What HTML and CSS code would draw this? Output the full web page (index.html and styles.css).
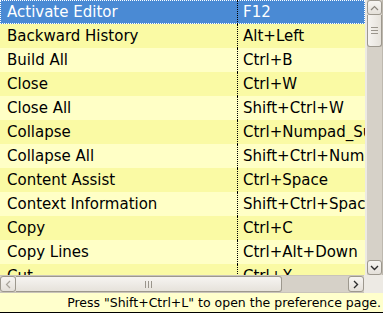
FILE: index.html
```html
<!DOCTYPE html>
<html lang="en">
<head>
  <meta charset="UTF-8" />
  <title>Key Assist</title>
  <link rel="stylesheet" href="styles.css">
</head>
<body>
  <div class="popup">
    <div class="main">
      <div class="list">
        <div class="row selected"><span class="cmd">Activate Editor</span><span class="key">F12</span></div>
        <div class="row odd"><span class="cmd">Backward History</span><span class="key">Alt+Left</span></div>
        <div class="row even"><span class="cmd">Build All</span><span class="key">Ctrl+B</span></div>
        <div class="row odd"><span class="cmd">Close</span><span class="key">Ctrl+W</span></div>
        <div class="row even"><span class="cmd">Close All</span><span class="key">Shift+Ctrl+W</span></div>
        <div class="row odd"><span class="cmd">Collapse</span><span class="key">Ctrl+Numpad_Subtract</span></div>
        <div class="row even"><span class="cmd">Collapse All</span><span class="key">Shift+Ctrl+Numpad_Divide</span></div>
        <div class="row odd"><span class="cmd">Content Assist</span><span class="key">Ctrl+Space</span></div>
        <div class="row even"><span class="cmd">Context Information</span><span class="key">Shift+Ctrl+Space</span></div>
        <div class="row odd"><span class="cmd">Copy</span><span class="key">Ctrl+C</span></div>
        <div class="row even"><span class="cmd">Copy Lines</span><span class="key">Ctrl+Alt+Down</span></div>
        <div class="row odd"><span class="cmd">Cut</span><span class="key">Ctrl+X</span></div>
      </div>
      <div class="vscroll">
        <div class="sbtn up">
          <svg width="9" height="6" viewBox="0 0 9 6"><path d="M1 5 L4.5 1.5 L8 5" fill="none" stroke="#8a857c" stroke-width="1.2"/></svg>
        </div>
        <div class="vthumb">
          <div class="grip-h"></div><div class="grip-h"></div><div class="grip-h"></div>
        </div>
        <div class="vtrough"></div>
        <div class="sbtn down">
          <svg width="9" height="6" viewBox="0 0 9 6"><path d="M1 1 L4.5 4.5 L8 1" fill="none" stroke="#2e2e2e" stroke-width="1.4"/></svg>
        </div>
      </div>
    </div>
    <div class="hbar">
      <div class="hscroll">
        <div class="sbtn left">
          <svg width="6" height="9" viewBox="0 0 6 9"><path d="M5 1 L1.5 4.5 L5 8" fill="none" stroke="#a8a39a" stroke-width="1.2"/></svg>
        </div>
        <div class="hthumb">
          <div class="grip-v"></div><div class="grip-v"></div><div class="grip-v"></div>
        </div>
        <div class="htrough"></div>
        <div class="sbtn right">
          <svg width="6" height="9" viewBox="0 0 6 9"><path d="M1 1 L4.5 4.5 L1 8" fill="none" stroke="#2e2e2e" stroke-width="1.4"/></svg>
        </div>
      </div>
      <div class="corner"></div>
    </div>
    <div class="status">Press "Shift+Ctrl+L" to open the preference page.</div>
  </div>
</body>
</html>
```

FILE: styles.css
```css
body {
  margin: 0;
  font-family: 'DejaVu Sans', sans-serif;
}
.popup {
  width: 383px;
  height: 313px;
  display: flex;
  flex-direction: column;
  background: #ffffcc;
  overflow: hidden;
}
.main {
  height: 275px;
  display: flex;
  background: #edeae4;
}
.list {
  width: 366px;
  overflow: hidden;
  font-size: 15px;
  color: #000;
}
.row {
  height: 24px;
  display: flex;
  align-items: center;
  white-space: nowrap;
}
.row.odd { background: #fafaa4; }
.row.even { background: #ffffc6; }
.row.selected {
  background: #4a8ad4;
  color: #fff;
  outline: 1px dotted #fff;
  outline-offset: -1px;
}
.cmd {
  flex: none;
  width: 238px;
  padding-left: 7px;
  border-right: 1px dotted #000;
  height: 24px;
  line-height: 24px;
  box-sizing: border-box;
}
.key {
  padding-left: 5px;
  height: 24px;
  line-height: 24px;
}
.vscroll {
  width: 15px;
  margin-left: 2px;
  display: flex;
  flex-direction: column;
  background: #d6d1c8;
  border-right: 1px solid #bdb8ae;
}
.sbtn {
  display: flex;
  align-items: center;
  justify-content: center;
  background: linear-gradient(#f7f5f2, #e4e0d9);
  border: 1px solid #9d988e;
  border-radius: 3px;
  box-sizing: border-box;
  flex: none;
}
.sbtn.up, .sbtn.down {
  height: 15px;
}
.vthumb {
  height: 32px;
  display: flex;
  flex-direction: column;
  align-items: center;
  justify-content: center;
  gap: 2px;
  background: linear-gradient(90deg, #f6f4f1, #e6e2db);
  border: 1px solid #9d988e;
  border-top: none;
  border-radius: 0 0 3px 3px;
  box-sizing: border-box;
}
.grip-h {
  width: 7px;
  height: 1px;
  background: #9a958c;
}
.vtrough { flex: 1; }
.hbar {
  height: 18px;
  display: flex;
  background: #edeae4;
}
.hscroll {
  width: 364px;
  display: flex;
  background: #d6d1c8;
  border-top: 1px solid #c9c4ba;
  border-bottom: 1px solid #c9c4ba;
  box-sizing: border-box;
}
.sbtn.left, .sbtn.right {
  width: 16px;
}
.hthumb {
  width: 266px;
  display: flex;
  align-items: center;
  justify-content: center;
  gap: 2px;
  background: linear-gradient(#f6f4f1, #e6e2db);
  border: 1px solid #9d988e;
  border-left: none;
  border-radius: 0 3px 3px 0;
  box-sizing: border-box;
}
.grip-v {
  width: 1px;
  height: 7px;
  background: #9a958c;
}
.htrough { flex: 1; }
.corner { flex: 1; }
.status {
  height: 20px;
  font-size: 12.5px;
  line-height: 20px;
  text-align: right;
  padding-right: 2px;
  white-space: nowrap;
  color: #000;
  border-bottom: 1px solid #000;
  box-sizing: border-box;
  background: #ffffcc;
}
```
